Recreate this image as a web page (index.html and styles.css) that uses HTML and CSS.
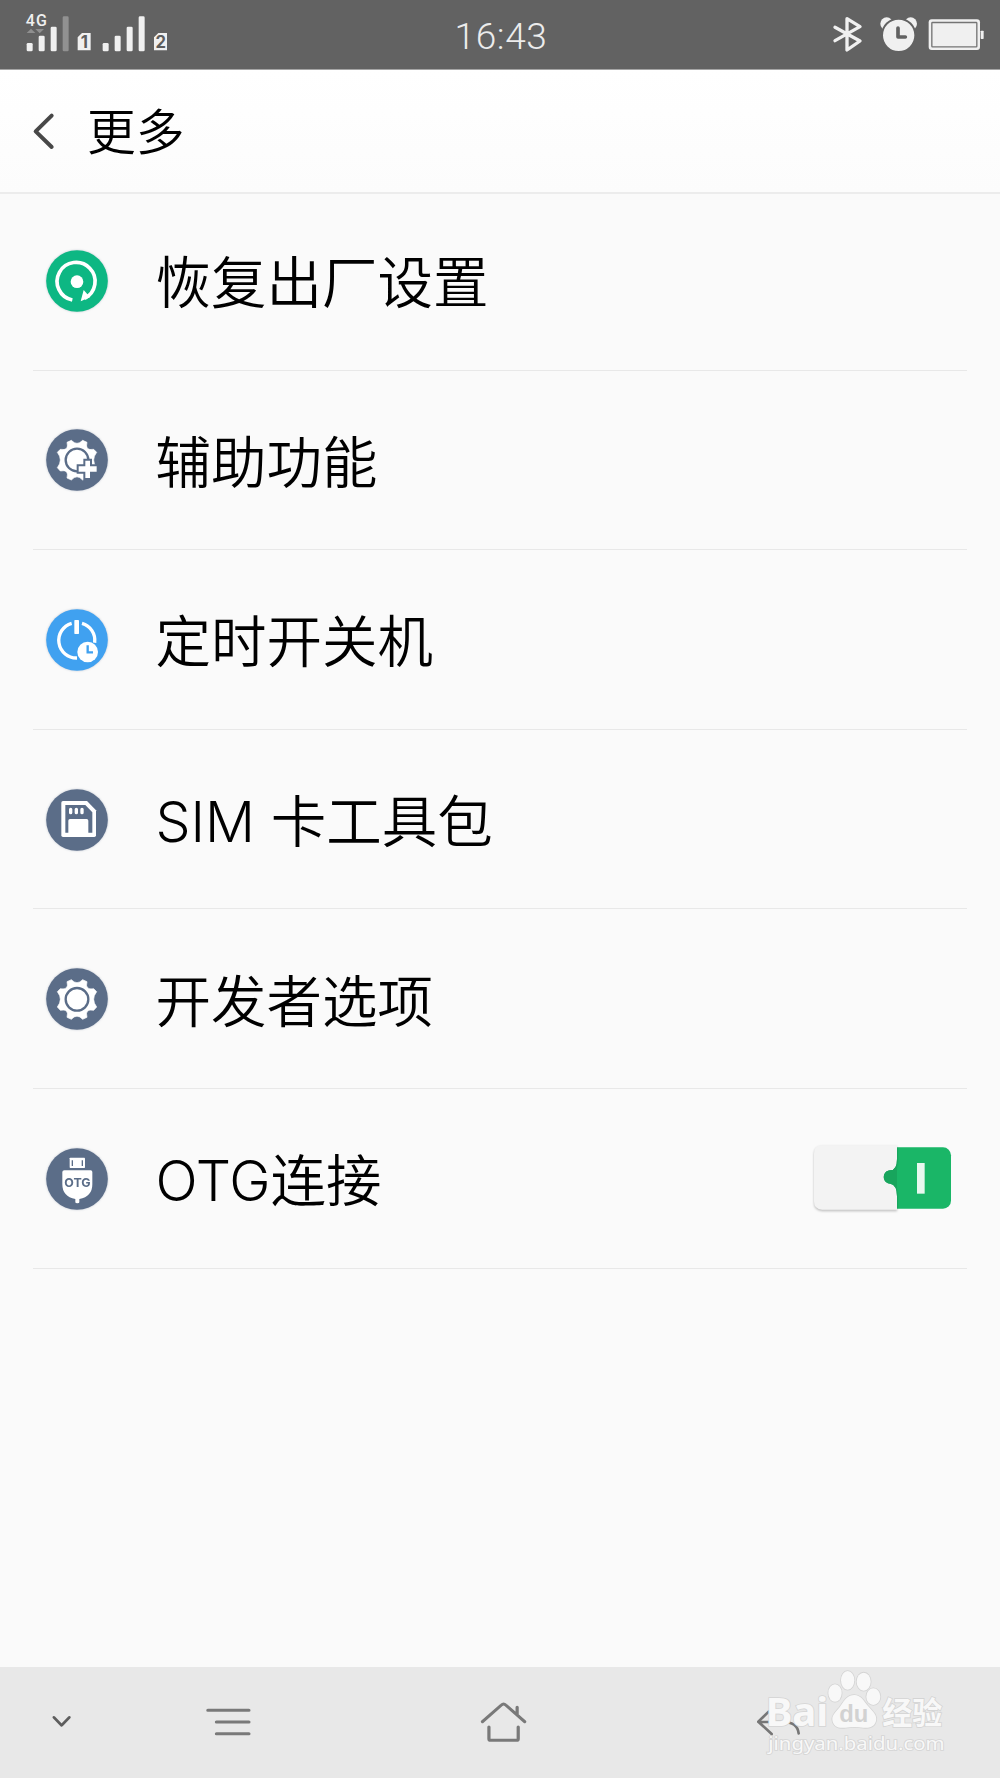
FILE: index.html
```html
<!DOCTYPE html>
<html lang="zh-CN">
<head>
<meta charset="utf-8">
<title>更多</title>
<link rel="stylesheet" href="styles.css">
</head>
<body>
<div class="screen">
  <div class="status">
    <svg class="status-icons" viewBox="0 0 600 208">
      <text class="net" x="77" y="77" textLength="64">4G</text>
      <path d="M80 99l13-13 13 13zM106 87h26l-13 13z" fill="#8f8f8f"/>
      <g fill="#f0f0f0">
        <rect x="80" y="129" width="18" height="25" rx="4"/><rect x="116" y="107" width="18" height="47" rx="4"/><rect x="152" y="80" width="18" height="74" rx="4"/>
        <rect x="188" y="49" width="18" height="105" rx="4" fill="#919191"/>
        <path d="M246 99h26v52h-39v-39zM475 99h26v52h-39v-39z"/>
        <rect x="308" y="129" width="18" height="25" rx="4"/><rect x="344" y="107" width="18" height="47" rx="4"/><rect x="380" y="80" width="18" height="74" rx="4"/><rect x="416" y="49" width="18" height="105" rx="4"/>
      </g>
      <text class="sim" x="253" y="144">1</text><text class="sim" x="482" y="144">2</text>
    </svg>
    <span class="clock">16:43</span>
    <svg class="status-icons" viewBox="0 0 600 208">
      <path d="M105 82l75 41-39 27V56l39 24-75 42" fill="none" stroke="#f0f0f0" stroke-width="10" stroke-linejoin="round" stroke-linecap="round"/>
      <circle cx="260" cy="71" r="19" fill="#f0f0f0"/><circle cx="332" cy="71" r="19" fill="#f0f0f0"/>
      <circle cx="296" cy="106" r="50" fill="#f0f0f0" stroke="#626262" stroke-width="6"/>
      <path d="M294 84v27h22" fill="none" stroke="#626262" stroke-width="11" stroke-linecap="round" stroke-linejoin="round"/>
      <rect x="386" y="58" width="154" height="92" rx="9" fill="#f0f0f0"/>
      <rect x="395.500" y="67.500" width="135" height="73" rx="2" fill="none" stroke="#747474" stroke-width="4"/>
      <rect x="542" y="92" width="9" height="25" rx="2" fill="#f0f0f0"/>
    </svg>
  </div>
  <div class="header">
    <svg class="back" viewBox="96 330 72 124"><path d="M155 344l-48 47 48 47" fill="none" stroke="#484848" stroke-width="12" stroke-linecap="round" stroke-linejoin="round"/></svg>
    <h1 class="title">更多</h1>
  </div>
  <div class="list">
    <div class="row">
      <svg class="icon" viewBox="75 55 192 192">
        <circle cx="171" cy="151" r="92.500" fill="#0db783"/>
        <path d="M157 208A57 57 0 1 1 194 203" fill="none" stroke="#fff" stroke-width="11"/>
        <path d="M191 178l-9 34 28-12z" fill="#fff"/><circle cx="171" cy="153" r="19" fill="#fff"/>
      </svg>
      <span class="label">恢复出厂设置</span>
    </div>
    <div class="row">
      <svg class="icon" viewBox="44 54 192 192">
        <circle cx="140" cy="150" r="92.500" fill="#5b6d88"/>
        <path class="gear" d="M123 91Q140 109 157 91L170 97Q163 123 190 118L199 127Q181 150 199 173L190 183Q163 177 170 204L157 210Q140 191 123 210L110 204Q117 177 90 183L81 173Q99 150 81 127L90 118Q117 123 110 97Z"/>
        <circle cx="140" cy="150" r="34" fill="#fff" stroke="#5b6d88" stroke-width="7"/>
        <path d="M162 149h20v17h20v22h-20v19h-20v-19h-20v-22h20z" fill="#fff" stroke="#5b6d88" stroke-width="6"/>
      </svg>
      <span class="label">辅助功能</span>
    </div>
    <div class="row">
      <svg class="icon" viewBox="44 54 192 192">
        <circle cx="140" cy="150" r="92.500" fill="#40a1f0"/>
        <path d="M124 100A53 53 0 0 0 140 204M155 100A53 53 0 0 1 193 158" fill="none" stroke="#fff" stroke-width="10"/>
        <rect x="132" y="90" width="14" height="42" rx="2" fill="#fff"/>
        <circle cx="172" cy="186" r="31" fill="#fff"/>
        <path d="M172 166v21h16" fill="none" stroke="#40a1f0" stroke-width="7"/>
      </svg>
      <span class="label">定时开关机</span>
    </div>
    <div class="row">
      <svg class="icon" viewBox="44 53 192 192">
        <circle cx="140" cy="149" r="92.500" fill="#5b6d88"/>
        <path d="M98 92H170L197 120V195Q197 200 192 200H98Q93 200 93 195V97Q93 92 98 92Z" fill="#fff"/>
        <path d="M105 104H165L186 126V187H174V151Q174 146 169 146H119Q114 146 114 151V187H105Z" fill="#5b6d88"/>
        <path d="M121 117v10M138 117v10M155 117v10" stroke="#fff" stroke-width="10" stroke-linecap="round"/>
      </svg>
      <span class="label">SIM 卡工具包</span>
    </div>
    <div class="row">
      <svg class="icon" viewBox="44 52 192 192">
        <circle cx="140" cy="148" r="92.500" fill="#5b6d88"/>
        <path class="gear" transform="translate(0 -1)" d="M123 91Q140 109 157 91L170 97Q163 123 190 118L199 127Q181 150 199 173L190 183Q163 177 170 204L157 210Q140 191 123 210L110 204Q117 177 90 183L81 173Q99 150 81 127L90 118Q117 123 110 97Z"/>
        <circle cx="140" cy="149" r="34" fill="#fff" stroke="#5b6d88" stroke-width="7"/>
      </svg>
      <span class="label">开发者选项</span>
    </div>
    <div class="row">
      <svg class="icon" viewBox="44 50 192 192">
        <circle cx="140" cy="146" r="92.500" fill="#5b6d88"/>
        <rect x="118" y="82" width="46" height="31" rx="2" fill="#fff"/>
        <path d="M126 90v17M156 90v17" stroke="#5b6d88" stroke-width="4"/>
        <path d="M102 120H181Q186 120 186 125V162Q186 199 147 206V216Q147 219 141 219Q135 219 135 216V206Q96 199 96 162V125Q96 120 102 120Z" fill="#fff"/>
        <text class="otg" x="102" y="170" textLength="79" lengthAdjust="spacingAndGlyphs">OTG</text>
      </svg>
      <span class="label">OTG连接</span>
      <svg class="switch" viewBox="60 60 435 225">
        <rect x="250" y="82" width="233" height="184" rx="24" fill="#1ab667"/>
        <path class="knob" d="M97 76H321V117Q321 151 301 151C275 152 275 190 301 191Q321 195 321 229V269H97Q72 269 72 244V101Q72 76 97 76Z"/>
        <path d="M321 117Q321 151 301 151C275 152 275 190 301 191Q321 195 321 229" fill="#18a55d"/>
        <rect x="381" y="129" width="23" height="92" fill="#e8f8ef"/>
      </svg>
    </div>
  </div>
  <div class="nav">
    <svg class="nav-icons" viewBox="0 51 2044 333" preserveAspectRatio="none" fill="none" stroke="#797979" stroke-width="9" stroke-linecap="round" stroke-linejoin="round">
      <path d="M151 202l21.500 24L194 202" stroke="#5d5d5d" stroke-width="8"/>
      <path d="M582 181H697M606 216H697M606 251H697"/>
      <path d="M1351 215L1404 165Q1410 159 1416 165L1469 215M1448 172v20M1369 231v35q0 5 5 5h72q5 0 5-5V231"/>
    </svg>
    <svg class="nav-back" viewBox="0 51 810 333">
      <path d="M116 185l-31 30 40 37M85 216H160Q202 216 206 250" fill="none" stroke="#767676" stroke-width="8" stroke-linecap="round" stroke-linejoin="round"/>
    </svg>
    <svg class="watermark" viewBox="0 51 810 333">
      <g class="mark">
        <text class="bai" x="107" y="229" textLength="188" lengthAdjust="spacingAndGlyphs">Bai</text>
        <ellipse cx="315" cy="129" rx="20" ry="26"/><ellipse cx="353" cy="91" rx="20" ry="28"/><ellipse cx="401" cy="95" rx="21" ry="27"/><ellipse cx="430" cy="140" rx="21" ry="25"/>
        <path d="M373 135C392 135 400 151 414 168C431 187 442 196 438 213C433 231 417 235 400 233Q373 229 346 233C324 236 309 228 307 209C305 194 323 182 333 166C344 149 354 135 373 135Z"/>
        <text class="jing" x="457" y="221" textLength="180" lengthAdjust="spacingAndGlyphs">经验</text>
        <text class="url" x="115" y="299" textLength="529" lengthAdjust="spacingAndGlyphs">jingyan.baidu.com</text>
      </g>
      <text class="du" x="328" y="217" textLength="87" lengthAdjust="spacingAndGlyphs">du</text>
    </svg>
  </div>
</div>
</body>
</html>
```
FILE: styles.css
```css
* { box-sizing: border-box; }
body { margin: 0; background: #fafafa; font-family: Inter, "Noto Sans CJK SC", sans-serif; }
.screen { width: 1000px; height: 1778px; display: flex; flex-direction: column; overflow: hidden; }
svg { display: block; flex: none; }
.status { height: 70px; flex: none; background: #626262; border-bottom: 1px solid #a5a5a5; display: flex; justify-content: space-between; align-items: center; }
.status-icons { width: 200px; height: 69.33px; }
.clock { color: #ececec; font: 350 37px Roboto, sans-serif; letter-spacing: 0.6px; padding: 4px 0 0 2px; }
.net { font: 500 48px Roboto, sans-serif; fill: #f0f0f0; }
.sim { font: 700 50px Inter, sans-serif; fill: #5d5d5d; text-anchor: middle; }
.header { height: 124px; flex: none; display: flex; align-items: center; padding: 1px 0 0 32px; background: linear-gradient(#fff, #fcfcfc); border-bottom: 2px solid #ececec; }
.back { width: 24px; height: 41.3px; }
.title { margin: 0 0 0 31px; padding-top: 2px; font-size: 48.8px; font-weight: 350; line-height: 70px; color: #000; }
.list { flex: 1; margin: -3px 33px 0 32.5px; }
.row { height: 179.6px; display: flex; align-items: center; border-bottom: 1.5px solid #e8e8e8; padding: 1px 0 0 12.5px; }
.icon { width: 64px; height: 64px; filter: drop-shadow(0 0 1px rgba(70, 90, 120, 0.3)); }
.gear { fill: #fff; stroke: #fff; stroke-width: 2; stroke-linejoin: round; }
.otg { font: 700 37px Inter, sans-serif; fill: #5b6d88; }
.label { flex: 1; margin-left: 46.5px; font-size: 55.5px; font-weight: 350; line-height: 80px; color: #000; padding-top: 5px; white-space: nowrap; }
.switch { width: 145px; height: 75px; margin: -2px 12px 0 0; }
.knob { fill: #f3f3f3; filter: drop-shadow(0 4px 3px rgba(0, 0, 0, 0.25)); }
.nav { position: relative; height: 111px; flex: none; background: #e8e8e8; }
.nav-icons { width: 730px; height: 111px; }
.nav-back, .watermark { position: absolute; left: 730px; top: 0; width: 270px; height: 111px; overflow: visible; }
.mark { fill: #f8f8f8; stroke: #d4d4d4; stroke-width: 5; paint-order: stroke; }
.bai { font: 700 120px "Noto Sans", sans-serif; }
.du { font: 700 74px "Liberation Sans", sans-serif; fill: #d2d2d2; }
.jing { font: 700 92px "Noto Sans CJK SC", sans-serif; }
.url { font: 400 56px "Noto Sans", sans-serif; }
```
